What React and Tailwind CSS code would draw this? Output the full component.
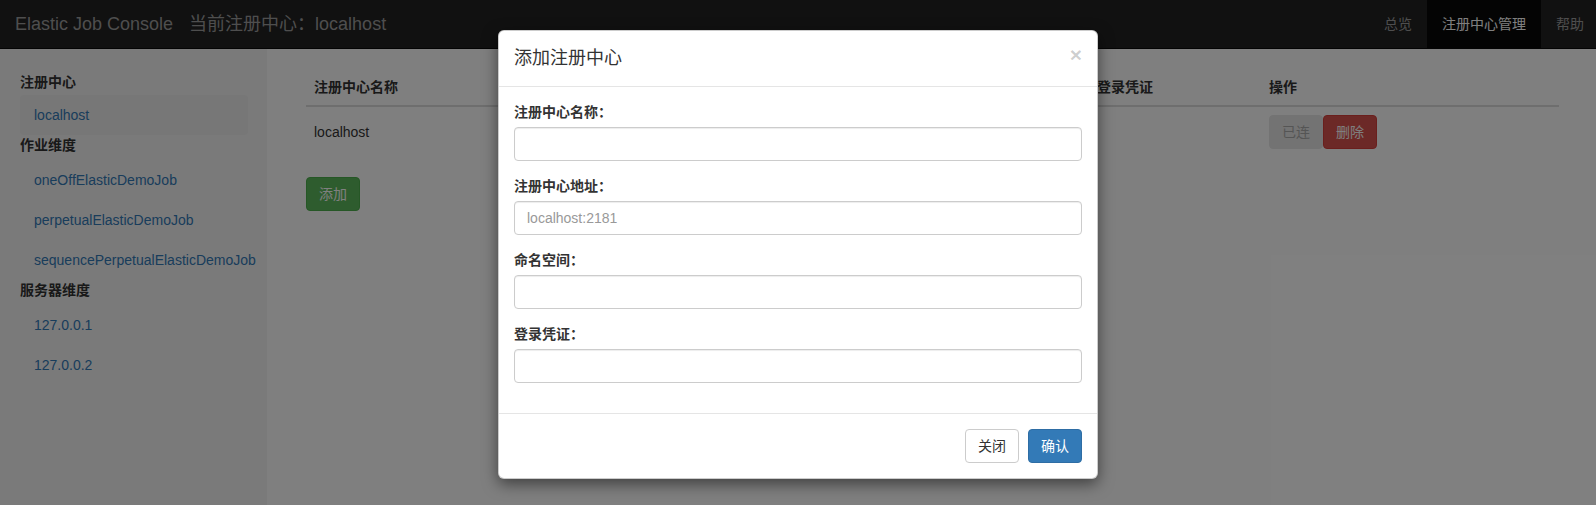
import React from "react";

const jobs = ["oneOffElasticDemoJob", "perpetualElasticDemoJob", "sequencePerpetualElasticDemoJob"];
const servers = ["127.0.0.1", "127.0.0.2"];

function SideHeader({ children }) {
  return <div className="h-[20px] text-[14px] font-bold leading-[20px] text-[#333]">{children}</div>;
}

function SideItem({ children, active }) {
  return (
    <div
      className={
        "h-[40px] w-[228px] whitespace-nowrap rounded-[4px] pl-[14px] leading-[40px] text-[#337ab7] " +
        (active ? "bg-[#eee]" : "")
      }
    >
      {children}
    </div>
  );
}

function Field({ label, placeholder }) {
  return (
    <div className="mb-[15px]">
      <div className="mb-[5px] h-[20px] text-[14px] font-bold leading-[20px] text-[#333]">{label}</div>
      <input
        className="h-[34px] w-full rounded-[4px] border border-[#ccc] px-[12px] text-[14px] text-[#555] shadow-[inset_0_1px_1px_rgba(0,0,0,0.075)] outline-none placeholder:text-[#999]"
        placeholder={placeholder}
      />
    </div>
  );
}

export default function App() {
  return (
    <div className="relative h-[505px] w-full overflow-hidden bg-white font-['Liberation_Sans','Noto_Sans_CJK_SC',sans-serif] text-[14px] text-[#333]">
      {/* 상단 네비게이션 */}
      <nav className="flex h-[49px] items-center justify-between border-b border-[#080808] bg-[#222]">
        <div className="flex items-center pl-[15px] text-[18px] text-[#9d9d9d]">
          <span>Elastic Job Console</span>
          <span className="ml-[16px]">当前注册中心：localhost</span>
        </div>
        <ul className="mr-[-3px] flex h-full">
          <li className="flex items-center px-[15px] text-[#9d9d9d]">总览</li>
          <li className="flex items-center bg-[#080808] px-[15px] text-white">注册中心管理</li>
          <li className="flex items-center px-[15px] text-[#9d9d9d]">帮助</li>
        </ul>
      </nav>

      <div className="flex h-[456px]">
        <aside className="w-[267px] shrink-0 bg-[#f5f5f5] pl-[20px] pt-[23px]">
          <SideHeader>注册中心</SideHeader>
          <div className="mt-[3px]">
            <SideItem active>localhost</SideItem>
          </div>
          <SideHeader>作业维度</SideHeader>
          <div className="mt-[5px]">
            {jobs.map((j) => (
              <SideItem key={j}>{j}</SideItem>
            ))}
          </div>
          <SideHeader>服务器维度</SideHeader>
          <div className="mt-[5px]">
            {servers.map((s) => (
              <SideItem key={s}>{s}</SideItem>
            ))}
          </div>
        </aside>

        <main className="flex-1 pl-[39px] pr-[37px] pt-[20px]">
          <table className="w-full border-collapse text-left">
            <thead>
              <tr className="border-b-2 border-[#ddd]">
                <th className="w-[260px] p-[8px] font-bold leading-[20px]">注册中心名称</th>
                <th className="w-[260px] p-[8px] font-bold leading-[20px]">注册中心地址</th>
                <th className="w-[263px] p-[8px] font-bold leading-[20px]">命名空间</th>
                <th className="w-[172px] p-[8px] font-bold leading-[20px]">登录凭证</th>
                <th className="p-[8px] font-bold leading-[20px]">操作</th>
              </tr>
            </thead>
            <tbody>
              <tr>
                <td className="p-[8px] align-middle leading-[20px]">localhost</td>
                <td className="p-[8px] align-middle leading-[20px]">localhost:2181</td>
                <td className="p-[8px] align-middle leading-[20px]">elastic-job-example</td>
                <td className="p-[8px] align-middle leading-[20px]"></td>
                <td className="p-[8px] align-middle">
                  <div className="flex">
                    <button className="h-[34px] w-[54px] rounded-[4px] border border-[#e6e6e6] bg-[#e6e6e6] text-[#aaa]">已连</button>
                    <button className="h-[34px] w-[54px] rounded-[4px] border border-[#d43f3a] bg-[#d9534f] text-white">删除</button>
                  </div>
                </td>
              </tr>
            </tbody>
          </table>
          <button className="mt-[20px] h-[34px] w-[54px] rounded-[4px] border border-[#4cae4c] bg-[#5cb85c] text-white">添加</button>
        </main>
      </div>

      {/* 모달 배경 */}
      <div className="absolute inset-0 bg-black/50" />

      <div className="absolute inset-x-0 top-[30px] flex justify-center">
        <div className="w-[600px] rounded-[6px] border border-black/20 bg-white shadow-[0_5px_15px_rgba(0,0,0,0.5)]">
          <div className="flex items-start justify-between border-b border-[#e5e5e5] p-[15px]">
            <h4 className="text-[18px] font-normal leading-[25px] text-[#333]">添加注册中心</h4>
            <span className="mt-[-2px] text-[21px] font-bold leading-[21px] text-black/20">×</span>
          </div>
          <div className="p-[15px]">
            <Field label="注册中心名称：" />
            <Field label="注册中心地址：" placeholder="localhost:2181" />
            <Field label="命名空间：" />
            <Field label="登录凭证：" />
          </div>
          <div className="flex justify-end gap-[9px] border-t border-[#e5e5e5] p-[15px]">
            <button className="h-[34px] rounded-[4px] border border-[#ccc] bg-white px-[12px] text-[#333]">关闭</button>
            <button className="h-[34px] rounded-[4px] border border-[#2e6da4] bg-[#337ab7] px-[12px] text-white">确认</button>
          </div>
        </div>
      </div>
    </div>
  );
}
